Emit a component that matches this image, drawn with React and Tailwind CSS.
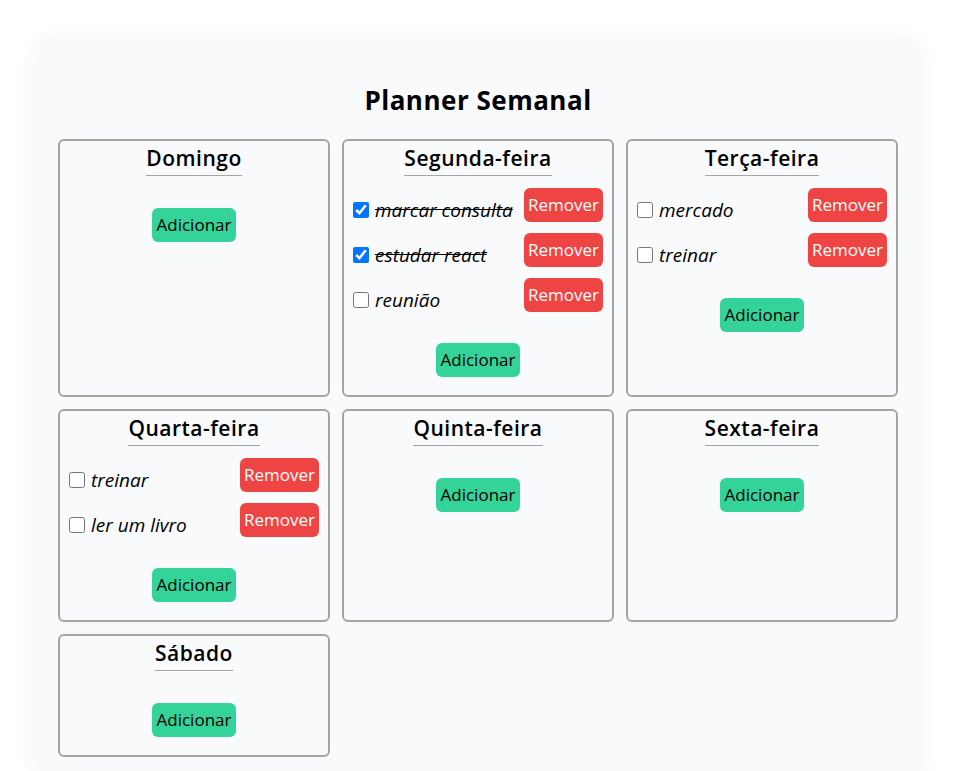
import React, { useState } from 'react';

const initialDays = [
  { name: 'Domingo', tasks: [] },
  {
    name: 'Segunda-feira',
    tasks: [
      { text: 'marcar consulta', done: true },
      { text: 'estudar react', done: true },
      { text: 'reunião', done: false },
    ],
  },
  {
    name: 'Terça-feira',
    tasks: [
      { text: 'mercado', done: false },
      { text: 'treinar', done: false },
    ],
  },
  {
    name: 'Quarta-feira',
    tasks: [
      { text: 'treinar', done: false },
      { text: 'ler um livro', done: false },
    ],
  },
  { name: 'Quinta-feira', tasks: [] },
  { name: 'Sexta-feira', tasks: [] },
  { name: 'Sábado', tasks: [] },
];

function DayCard({ day, onToggle, onRemove, onAdd }) {
  return (
    <div className="flex flex-col items-center border-2 border-[#a8a4a0] rounded-md px-[9px] pt-[3px] pb-[8px]">
      <h2 className="inline-block text-[21px] leading-7 font-semibold tracking-[0.5px] border-b border-[#a6a6a6] pb-[3px]">
        {day.name}
      </h2>
      <ul className="w-full mt-3 mb-5">
        {day.tasks.map((task, i) => (
          <li key={i} className="flex justify-between items-start h-[34px] mb-[11px]">
            <label className="flex items-center gap-[6px] mt-[10px] leading-6">
              <input
                type="checkbox"
                checked={task.done}
                onChange={() => onToggle(i)}
                className="w-4 h-4"
              />
              <span className={`text-[19px] leading-6 italic ${task.done ? 'line-through' : ''}`}>
                {task.text}
              </span>
            </label>
            <button
              onClick={() => onRemove(i)}
              className="h-[34px] px-[4px] rounded-md bg-[#ef4444] text-white text-[17px]"
            >
              Remover
            </button>
          </li>
        ))}
      </ul>
      <button
        onClick={onAdd}
        className="h-[34px] px-[5px] mb-[10px] rounded-md bg-[#34d399] text-black text-[17px]"
      >
        Adicionar
      </button>
    </div>
  );
}

export default function App() {
  const [days, setDays] = useState(initialDays);

  const toggle = (d, i) =>
    setDays(days.map((day, di) =>
      di !== d ? day : { ...day, tasks: day.tasks.map((t, ti) => (ti === i ? { ...t, done: !t.done } : t)) }
    ));

  const remove = (d, i) =>
    setDays(days.map((day, di) => (di !== d ? day : { ...day, tasks: day.tasks.filter((_, ti) => ti !== i) })));

  const add = (d) => {
    const text = window.prompt('Nova tarefa');
    if (!text) return;
    setDays(days.map((day, di) => (di !== d ? day : { ...day, tasks: [...day.tasks, { text, done: false }] })));
  };

  return (
    <div className="min-h-screen bg-white pt-[38px]" style={{ fontFamily: '"Open Sans", "Noto Sans", sans-serif' }}>
      <div className="w-[882px] mx-auto bg-[#f9fafb] rounded-xl shadow-[0_4px_24px_rgba(0,0,0,0.06)] px-[21px] pt-[46px] pb-[21px]">
        <h1 className="text-[26px] leading-8 font-bold tracking-[0.5px] text-center mb-[23px]">Planner Semanal</h1>
        <div className="grid grid-cols-3 gap-3">
          {days.map((day, d) => (
            <DayCard
              key={day.name}
              day={day}
              onToggle={(i) => toggle(d, i)}
              onRemove={(i) => remove(d, i)}
              onAdd={() => add(d)}
            />
          ))}
        </div>
      </div>
    </div>
  );
}
